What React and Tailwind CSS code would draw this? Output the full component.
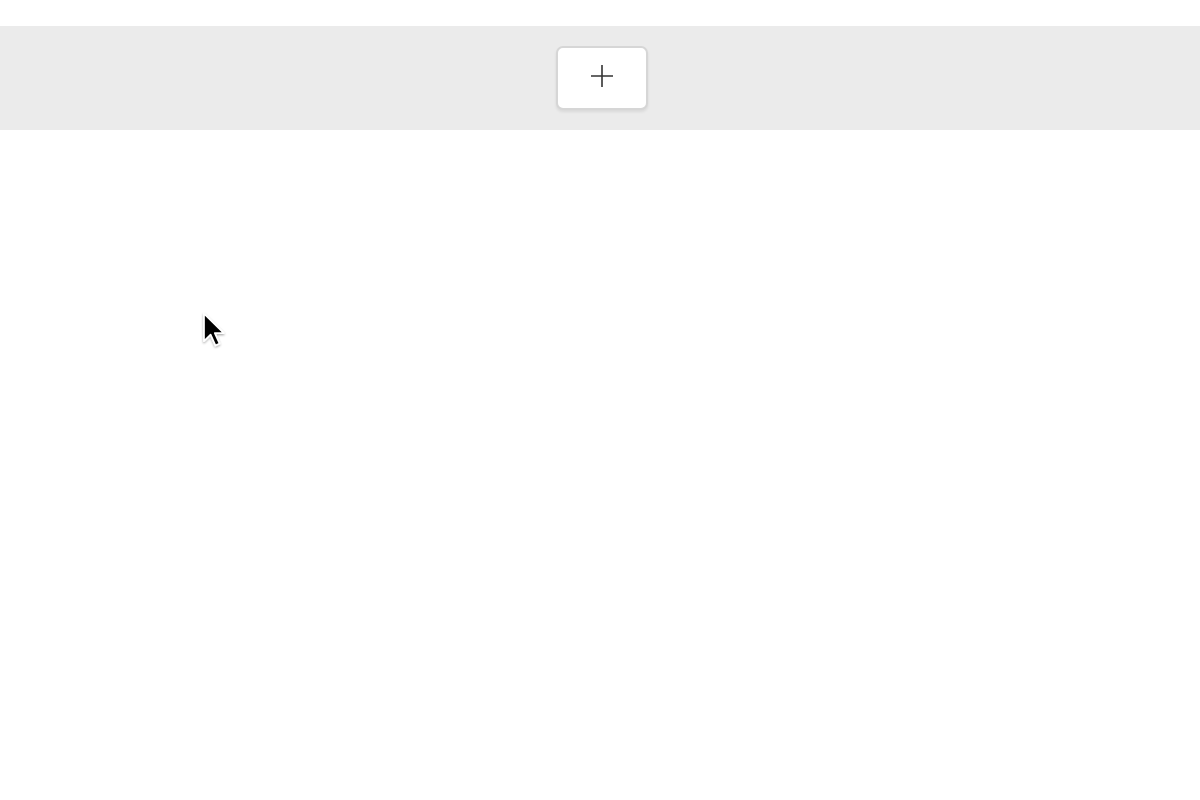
export default function App() {
  return (
    <div className="relative w-[1200px] h-[800px] bg-white" style={{ fontFamily: '"Liberation Sans", sans-serif' }}>
      <div className="h-[26px]" />
      <div className="h-[104px] bg-[#ebebeb] flex justify-center items-start pt-[20px] pl-[4px]">
        <button className="w-[92px] h-[64px] bg-white rounded-[7px] border-2 border-[#d6d6d6] shadow-[0_2px_3px_rgba(0,0,0,0.08)] flex items-center justify-center">
          <svg width="24" height="24" viewBox="0 0 24 24" className="-mt-[4px]">
            <path d="M12 1V23M1 12H23" stroke="#333" strokeWidth="1.6" fill="none" />
          </svg>
        </button>
      </div>
      <svg className="absolute left-[199px] top-[310px]" width="34" height="48" viewBox="0 0 28 40">
        <defs>
          <filter id="sh" x="-50%" y="-50%" width="200%" height="200%">
            <feDropShadow dx="0" dy="1" stdDeviation="1" floodOpacity="0.35" />
          </filter>
        </defs>
        <path d="M4 3 L4 26 L9.5 20.5 L13.5 29.5 L17 28 L13 19.2 L20.5 19.2 Z" fill="#000" stroke="#fff" strokeWidth="1.4" strokeLinejoin="round" filter="url(#sh)" />
      </svg>
    </div>
  );
}
